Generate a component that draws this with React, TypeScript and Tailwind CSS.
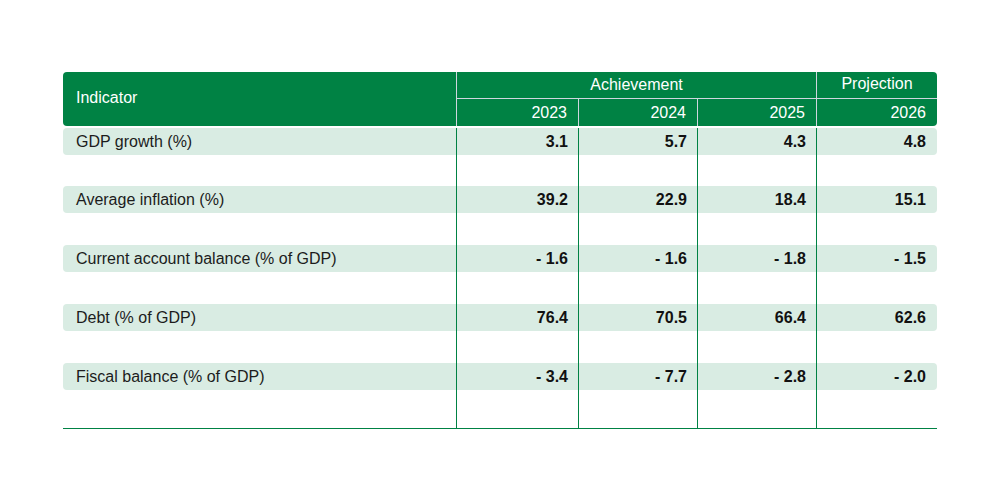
const years = ["2023", "2024", "2025", "2026"]

const rows = [
  { label: "GDP growth (%)", values: ["3.1", "5.7", "4.3", "4.8"] },
  { label: "Average inflation (%)", values: ["39.2", "22.9", "18.4", "15.1"] },
  { label: "Current account balance (% of GDP)", values: ["- 1.6", "- 1.6", "- 1.8", "- 1.5"] },
  { label: "Debt (% of GDP)", values: ["76.4", "70.5", "66.4", "62.6"] },
  { label: "Fiscal balance (% of GDP)", values: ["- 3.4", "- 7.7", "- 2.8", "- 2.0"] },
]

const rowHeights = ["h-[60px] pt-[2px]", "h-[59px]", "h-[59px]", "h-[59px]", "h-[65px]"]

export default function App() {
  return (
    <div className="min-h-[500px] w-full bg-white pt-[72px] font-['Liberation_Sans',Arial,sans-serif] text-[16px]">
      <div className="mx-auto w-[874px]">
        {/* header */}
        <div className="grid grid-cols-[393px_122px_119px_119px_121px] grid-rows-[26px_28px] overflow-hidden rounded-[4px] bg-[#008244] text-white">
          <div className="row-span-2 flex items-center pl-[13px] pb-[2px]">Indicator</div>
          <div className="col-span-3 flex items-center justify-center border-l border-[#cfd6df]">Achievement</div>
          <div className="flex items-center justify-center border-l border-[#cfd6df] pb-[3px]">Projection</div>
          {years.map((y) => (
            <div key={y} className="flex items-center justify-end border-l border-t border-[#cfd6df] pr-[11px] pt-[1px]">
              {y}
            </div>
          ))}
        </div>

        {/* body */}
        <div className="border-b border-[#008244]">
          {rows.map((row, i) => (
            <div key={row.label} className={`grid grid-cols-[393px_122px_119px_119px_121px] ${rowHeights[i]}`}>
              <div>
                <div className="flex h-[27px] items-center rounded-l-[4px] bg-[#d9ece3] pl-[13px] text-[#1c1c1c]">
                  {row.label}
                </div>
              </div>
              {row.values.map((v, j) => (
                <div key={j} className="border-l border-[#008244]">
                  <div
                    className={`flex h-[27px] items-center justify-end bg-[#d9ece3] pr-[10px] font-bold text-[#111] ${
                      j === 3 ? "rounded-r-[4px] pr-[11px]" : ""
                    }`}
                  >
                    {v}
                  </div>
                </div>
              ))}
            </div>
          ))}
        </div>
      </div>
    </div>
  )
}
